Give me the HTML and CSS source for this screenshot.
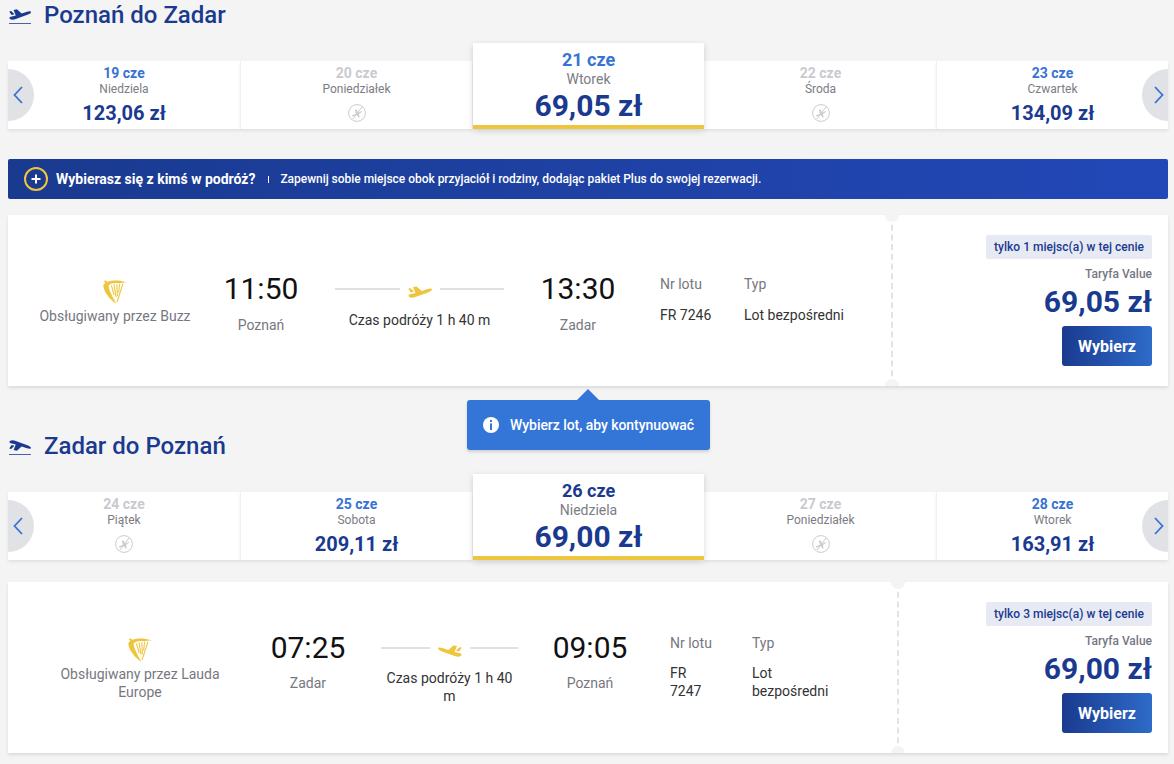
FILE: index.html
```html
<!DOCTYPE html>
<html lang="pl">
<head>
<meta charset="utf-8">
<title>Wybierz lot</title>
<link rel="stylesheet" href="styles.css">
</head>
<body>
<svg class="defs" width="0" height="0" aria-hidden="true">
  <defs>
    <symbol id="plane" viewBox="0 0 24 12">
      <path d="M1 8.6 L7.4 7 L5 1 L8.6 0.4 L13.8 5 L19.6 3 C21.6 2.3 23.8 2.2 24 3.2 C24.2 4.4 22.2 5.6 20 6.4 L7.4 11 C5 11.9 2.2 12 1 10.8 C0.4 10.2 0.4 9.2 1 8.6 Z M0.2 2.6 L2.4 2.2 L6 5.6 L2.8 6.6 Z"/>
    </symbol>
    <symbol id="harp" viewBox="0 0 24 24">
      <path d="M0.6 1 L3 0.4 L4.4 2 C9 0 17 0 24 2.6 C20 2.6 18 3 16.4 3.4 C12 2.6 8 3.4 5.6 5.4 C5.8 10 9 15.6 13.4 23.8 C7 19.6 1.2 12.4 0.4 6.4 C0 5 1.4 3.4 2.4 3 Z"/>
      <g fill="none" stroke="currentColor" stroke-width="1.1">
        <path d="M8.4 5.4 L11.2 15.2"/>
        <path d="M11 4.4 L13 17"/>
        <path d="M13.8 4.2 L14.4 16"/>
        <path d="M16.6 4.2 L15.6 12.6"/>
        <path d="M20 3.6 L14 22"/>
      </g>
    </symbol>
    <symbol id="noflight" viewBox="0 0 18 18">
      <circle cx="9" cy="9" r="8.4" fill="none" stroke="currentColor" stroke-width="1"/>
      <path d="M3.6 11.4 L8 9.8 L6.8 5.4 L8.4 5.4 L10.2 8.8 L13.8 7 L14.4 7.6 L11 10 L11.6 13.4 L10.4 13.6 L9 11 L4.6 12.6 Z" fill="currentColor"/>
      <path d="M14 3 L5 15" fill="none" stroke="currentColor" stroke-width="1"/>
    </symbol>
  </defs>
</svg>

<main class="page">
  <section class="leg">
    <h2 class="leg-title">
      <span class="leg-icon">
        <svg class="leg-plane" viewBox="0 0 24 12"><use href="#plane"/></svg>
      </span>
      Poznań do Zadar
    </h2>
    <div class="dates">
      <button class="arrow arrow-left" aria-label="Poprzedni"><svg viewBox="0 0 10 18"><path d="M9 1 L1.5 9 L9 17"/></svg></button>
      <div class="day"><div class="day-date">19 cze</div><div class="day-name">Niedziela</div><div class="day-price">123,06 zł</div></div>
      <div class="day day-off"><div class="day-date">20 cze</div><div class="day-name">Poniedziałek</div><svg class="no-flight"><use href="#noflight"/></svg></div>
      <div class="day day-active day-active-blue"><div class="day-date">21 cze</div><div class="day-name">Wtorek</div><div class="day-price">69,05 zł</div></div>
      <div class="day day-off"><div class="day-date">22 cze</div><div class="day-name">Środa</div><svg class="no-flight"><use href="#noflight"/></svg></div>
      <div class="day"><div class="day-date">23 cze</div><div class="day-name">Czwartek</div><div class="day-price">134,09 zł</div></div>
      <button class="arrow arrow-right" aria-label="Następny"><svg viewBox="0 0 10 18"><path d="M1 1 L8.5 9 L1 17"/></svg></button>
    </div>
    <div class="promo">
      <span class="promo-plus"><svg viewBox="0 0 12 12"><path d="M6 1.5 V10.5 M1.5 6 H10.5"/></svg></span>
      <strong class="promo-title">Wybierasz się z kimś w podróż?</strong>
      <span class="promo-sep"></span>
      <span class="promo-text">Zapewnij sobie miejsce obok przyjaciół i rodziny, dodając pakiet Plus do swojej rezerwacji.</span>
    </div>
    <article class="flight flight-out">
      <div class="flight-info">
        <div class="carrier">
          <svg class="harp"><use href="#harp"/></svg>
          <div class="carrier-name">Obsługiwany przez Buzz</div>
        </div>
        <div class="stop"><div class="stop-time">11:50</div><div class="stop-city">Poznań</div></div>
        <div class="journey">
          <div class="journey-inner">
            <div class="journey-line"><svg class="journey-plane" viewBox="0 0 24 12"><use href="#plane"/></svg></div>
            <div class="journey-time">Czas podróży 1 h 40 m</div>
          </div>
        </div>
        <div class="stop"><div class="stop-time">13:30</div><div class="stop-city">Zadar</div></div>
        <div class="meta meta-no"><div class="meta-label">Nr lotu</div><div class="meta-value">FR 7246</div></div>
        <div class="meta meta-type"><div class="meta-label">Typ</div><div class="meta-value">Lot bezpośredni</div></div>
      </div>
      <div class="fare">
        <div class="fare-left">tylko 1 miejsc(a) w tej cenie</div>
        <div class="fare-name">Taryfa Value</div>
        <div class="fare-price">69,05 zł</div>
        <button class="select">Wybierz</button>
      </div>
    </article>
    <div class="toast">
      <svg class="toast-icon" viewBox="0 0 16 16"><circle cx="8" cy="8" r="8"/><rect x="7" y="3" width="2" height="2"/><rect x="7" y="6.4" width="2" height="6.6"/></svg>
      <span>Wybierz lot, aby kontynuować</span>
    </div>
  </section>

  <section class="leg leg-return">
    <h2 class="leg-title">
      <span class="leg-icon">
        <svg class="leg-plane leg-plane-land" viewBox="0 0 24 12"><use href="#plane"/></svg>
      </span>
      Zadar do Poznań
    </h2>
    <div class="dates">
      <button class="arrow arrow-left" aria-label="Poprzedni"><svg viewBox="0 0 10 18"><path d="M9 1 L1.5 9 L9 17"/></svg></button>
      <div class="day day-off"><div class="day-date">24 cze</div><div class="day-name">Piątek</div><svg class="no-flight"><use href="#noflight"/></svg></div>
      <div class="day"><div class="day-date">25 cze</div><div class="day-name">Sobota</div><div class="day-price">209,11 zł</div></div>
      <div class="day day-active"><div class="day-date">26 cze</div><div class="day-name">Niedziela</div><div class="day-price">69,00 zł</div></div>
      <div class="day day-off"><div class="day-date">27 cze</div><div class="day-name">Poniedziałek</div><svg class="no-flight"><use href="#noflight"/></svg></div>
      <div class="day"><div class="day-date">28 cze</div><div class="day-name">Wtorek</div><div class="day-price">163,91 zł</div></div>
      <button class="arrow arrow-right" aria-label="Następny"><svg viewBox="0 0 10 18"><path d="M1 1 L8.5 9 L1 17"/></svg></button>
    </div>
    <article class="flight flight-back">
      <div class="flight-info">
        <div class="carrier">
          <svg class="harp"><use href="#harp"/></svg>
          <div class="carrier-name">Obsługiwany przez Lauda Europe</div>
        </div>
        <div class="stop"><div class="stop-time">07:25</div><div class="stop-city">Zadar</div></div>
        <div class="journey">
          <div class="journey-inner">
            <div class="journey-line"><svg class="journey-plane journey-plane-land" viewBox="0 0 24 12"><use href="#plane"/></svg></div>
            <div class="journey-time">Czas podróży 1 h 40 m</div>
          </div>
        </div>
        <div class="stop"><div class="stop-time">09:05</div><div class="stop-city">Poznań</div></div>
        <div class="meta meta-no"><div class="meta-label">Nr lotu</div><div class="meta-value">FR 7247</div></div>
        <div class="meta meta-type"><div class="meta-label">Typ</div><div class="meta-value">Lot bezpośredni</div></div>
      </div>
      <div class="fare">
        <div class="fare-left">tylko 3 miejsc(a) w tej cenie</div>
        <div class="fare-name">Taryfa Value</div>
        <div class="fare-price">69,00 zł</div>
        <button class="select">Wybierz</button>
      </div>
    </article>
  </section>
</main>
</body>
</html>
```

FILE: styles.css
```css
* { box-sizing: border-box; }
html, body { margin: 0; padding: 0; }
body {
  background: #f4f4f4;
  font-family: Roboto, "Liberation Sans", sans-serif;
  color: #222;
  overflow: hidden;
  height: 764px;
}
.defs { position: absolute; }
.page { width: 1160px; margin-left: 8px; position: relative; }
.leg-return { margin-top: 46px; }

.leg-title {
  margin: 1px 0 0;
  height: 28px;
  display: flex;
  align-items: center;
  gap: 13px;
  font-size: 24px;
  line-height: 28px;
  font-weight: 500;
  color: #1a3a8f;
}
.leg-icon {
  width: 22px;
  height: 18px;
  margin-left: 1px;
  padding-top: 3px;
  border-bottom: 1px solid #4a63a8;
}
.leg-plane { width: 22px; height: 11px; fill: #1a3a8f; display: block; }
.leg-plane-land { transform: scaleY(-1); }

.dates {
  margin-top: 14px;
  height: 86px;
  display: flex;
  align-items: flex-end;
  position: relative;
}
.day {
  flex: 0 0 232px;
  height: 68px;
  background: #fff;
  box-shadow: 0 2px 3px rgba(0, 0, 0, .08);
  text-align: center;
  padding-top: 4px;
}
.day + .day { border-left: 1px solid #f0f0f0; }
.day-date { font-size: 14px; line-height: 16px; font-weight: 700; color: #3673d4; }
.day-name { margin-top: 1px; font-size: 12px; line-height: 15px; color: #7c7c84; }
.day-price { margin-top: 4px; font-size: 20px; line-height: 24px; font-weight: 700; color: #1a3a8f; }
.day-off .day-date { color: #c9cad0; }
.no-flight { width: 18px; height: 18px; margin-top: 7px; color: #c9cbd0; display: inline-block; }
.day + .day-active {
  flex-basis: 231px;
  margin-left: 1px;
  height: 86px;
  padding-top: 6px;
  border-left: 0;
  border-bottom: 4px solid #eec63d;
  box-shadow: 0 2px 6px rgba(0, 0, 0, .16);
  position: relative;
  z-index: 1;
}
.day-active + .day { border-left-color: #fff; }
.day-active .day-date { font-size: 18px; line-height: 21px; color: #1a3a8f; }
.day-active-blue .day-date { color: #3673d4; }
.day-active .day-name { font-size: 14px; line-height: 16px; }
.day-active .day-price { margin-top: 1px; font-size: 30px; line-height: 36px; }

.arrow {
  position: absolute;
  bottom: 8px;
  z-index: 2;
  width: 26px;
  height: 52px;
  border: 0;
  padding: 0;
  background: #e0e2e5;
  display: flex;
  align-items: center;
  justify-content: center;
}
.arrow svg { width: 10px; height: 18px; fill: none; stroke: #3673d4; stroke-width: 1.8; }
.arrow-left { left: 0; padding-right: 6px; border-radius: 0 26px 26px 0; }
.arrow-right { right: 0; padding-left: 7px; border-radius: 26px 0 0 26px; }

.promo {
  margin-top: 30px;
  height: 40px;
  border-radius: 2px;
  background: linear-gradient(90deg, #1a3a8f, #2248b8);
  display: flex;
  align-items: center;
  padding-left: 16px;
  color: #fff;
}
.promo-plus {
  width: 24px;
  height: 24px;
  border: 2px solid #eec63d;
  border-radius: 50%;
  display: flex;
  align-items: center;
  justify-content: center;
}
.promo-plus svg { width: 12px; height: 12px; stroke: #fff; stroke-width: 2; fill: none; }
.promo-title { margin-left: 8px; font-size: 14px; font-weight: 700; }
.promo-sep { width: 1px; height: 7px; background: #fff; margin: 1px 11px 0 13px; }
.promo-text { font-size: 12px; font-weight: 500; letter-spacing: -.03px; margin-top: -1px; }

.flight {
  margin-top: 16px;
  height: 171px;
  background: #fff;
  box-shadow: 0 2px 3px rgba(0, 0, 0, .1);
  display: flex;
}
.flight-back { margin-top: 22px; }
.flight-info {
  display: grid;
  align-items: start;
  position: relative;
  padding-top: 56px;
  border-right: 2px dashed #e2e3e6;
}
.flight-out .flight-info {
  width: 885px;
  grid-template-columns: 214px 78px 239px 78px 127px 1fr;
}
.flight-back .flight-info {
  width: 891px;
  padding-top: 48px;
  grid-template-columns: 261px 78px 205px 76px 124px 1fr;
}
.flight-info::before,
.flight-info::after {
  content: "";
  position: absolute;
  right: -8px;
  width: 14px;
  height: 7px;
  background: #f4f4f4;
}
.flight-info::before { top: 0; border-radius: 0 0 7px 7px; }
.flight-info::after { bottom: 0; border-radius: 7px 7px 0 0; }

.carrier { text-align: center; padding-top: 9px; }
.harp { width: 24px; height: 24px; fill: #eec63d; color: #eec63d; display: block; margin: 0 auto 3px; }
.carrier-name { font-size: 14px; line-height: 18px; color: #77777f; }
.flight-back .carrier { padding: 8px 47px 0 50px; }

.stop { text-align: center; white-space: nowrap; }
.stop-time { font-size: 30px; line-height: 36px; color: #111; margin-left: -2px; margin-right: -2px; }
.stop-city { margin-top: 9px; font-size: 14px; line-height: 18px; color: #77777f; }
.flight-back .stop-city { margin-top: 8px; }

.journey { display: flex; justify-content: center; padding-top: 8px; }
.journey-inner { width: 169px; text-align: center; }
.flight-back .journey-inner { width: 137px; }
.journey-line {
  display: flex;
  align-items: center;
  justify-content: center;
  height: 20px;
  background: linear-gradient(#e0e0e0, #e0e0e0) center / 100% 2px no-repeat;
}
.journey-plane {
  width: 40px;
  padding: 0 8px;
  height: 12px;
  margin-top: 6px;
  fill: #eec63d;
  background: #fff;
}
.journey-plane-land { transform: scaleX(-1); }
.journey-time { margin-top: 12px; font-size: 14px; line-height: 18px; color: #333; }
.flight-back .journey-time { margin-top: 11px; }

.meta-no { padding-left: 43px; }
.flight-back .meta-no { padding-left: 42px; }
.meta { padding-top: 4px; }
.meta-label { font-size: 14px; line-height: 18px; color: #77777f; }
.meta-value { margin-top: 13px; font-size: 14px; line-height: 18px; color: #333; }
.flight-back .meta-value { margin-top: 12px; max-width: 80px; }
.flight-back .meta-no .meta-value { width: 40px; }

.fare {
  flex: 1;
  padding: 20px 16px 0 0;
  display: flex;
  flex-direction: column;
  align-items: flex-end;
}
.fare-left {
  height: 24px;
  padding: 0 8px;
  background: #e7eaf3;
  border-radius: 2px;
  font-size: 12px;
  line-height: 24px;
  font-weight: 500;
  letter-spacing: .03px;
  color: #1a3a8f;
}
.fare-name { margin-top: 8px; font-size: 12px; line-height: 14px; font-weight: 500; color: #77777f; }
.fare-price { margin-top: 3px; font-size: 30px; line-height: 36px; font-weight: 700; color: #1a3a8f; }
.select {
  margin-top: 6px;
  width: 90px;
  height: 40px;
  border: 0;
  border-radius: 3px;
  background: linear-gradient(90deg, #1a3a8f, #2e6bc9);
  color: #fff;
  font-family: inherit;
  font-size: 16px;
  font-weight: 700;
}

.toast {
  position: absolute;
  left: 459px;
  top: 399px;
  width: 243px;
  height: 50px;
  border-radius: 3px;
  background: #3476d8;
  box-shadow: 0 2px 3px rgba(0, 0, 0, .15);
  color: #fff;
  font-size: 14px;
  font-weight: 500;
  letter-spacing: -.05px;
  display: flex;
  align-items: center;
  padding-left: 16px;
  gap: 11px;
  z-index: 2;
}
.toast::before {
  content: "";
  position: absolute;
  left: 110px;
  top: -11px;
  border: 11px solid transparent;
  border-top: 0;
  border-bottom-color: #3476d8;
}
.toast-icon { width: 16px; height: 16px; fill: #fff; }
.toast-icon rect { fill: #3476d8; }
```
